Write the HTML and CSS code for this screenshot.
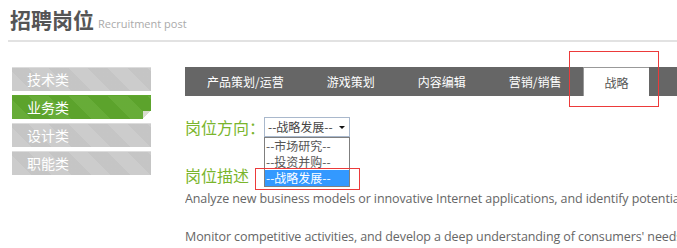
FILE: index.html
```html
<!DOCTYPE html>
<html lang="zh-CN">
<head>
  <meta charset="UTF-8">
  <title>招聘岗位</title>
  <link rel="stylesheet" href="styles.css">
</head>
<body>

  <div class="header">
    <h1>招聘岗位</h1>
    <span class="sub">Recruitment post</span>
  </div>

  <div class="wrap">
    <ul class="side">
      <li>技术类</li>
      <li class="on">业务类</li>
      <li>设计类</li>
      <li>职能类</li>
    </ul>

    <div class="main">
      <div class="tabs">
        <span class="tab">产品策划/运营</span>
        <span class="tab">游戏策划</span>
        <span class="tab">内容编辑</span>
        <span class="tab">营销/销售</span>
        <span class="tab active">战略<i class="mark mark-tab"></i></span>
      </div>

      <div class="row">
        <span class="label">岗位方向：</span>
        <div class="select">
          <span>--战略发展--</span>
          <b class="arrow"></b>
          <ul class="options">
            <li>--市场研究--</li>
            <li>--投资并购--</li>
            <li class="sel">--战略发展--<i class="mark mark-opt"></i></li>
          </ul>
        </div>
      </div>

      <h2 class="label desc-title">岗位描述</h2>
      <p>Analyze new business models or innovative Internet applications, and identify potential opportunities.</p>
      <p>Monitor competitive activities, and develop a deep understanding of consumers' needs.</p>
    </div>
  </div>

</body>
</html>
```

FILE: styles.css
```css
body {
  margin: 0;
  font-family: "Noto Sans CJK SC", sans-serif;
  background: #fff;
  overflow: hidden;
}
.header {
  display: flex;
  align-items: baseline;
  margin-left: 8px;
  height: 40px;
  border-bottom: 2px solid #e2e2e2;
}
.header h1 {
  margin: 0 0 0 2px;
  font-size: 21px;
  font-weight: bold;
  color: #555;
  line-height: 38px;
}
.header .sub {
  margin-left: 4px;
  font-family: "Open Sans", sans-serif;
  font-size: 11px;
  color: #aaa;
}
.wrap {
  display: flex;
  padding-top: 25px;
}
.side {
  list-style: none;
  margin: 0 0 0 12px;
  padding: 0;
  width: 139px;
}
.side li {
  position: relative;
  height: 24px;
  line-height: 23px;
  margin-bottom: 4px;
  padding-left: 15px;
  font-size: 14px;
  color: #fff;
  background: #c9c9c9 repeating-linear-gradient(45deg, rgba(255,255,255,0.06) 0 14px, rgba(0,0,0,0.02) 14px 28px);
  border-top: 1px solid #dcdcdc;
  box-sizing: border-box;
}
.side li.on {
  background: #5fa82d repeating-linear-gradient(45deg, rgba(255,255,255,0.05) 0 14px, rgba(0,0,0,0.03) 14px 28px);
  border-top-color: #5fa82d;
}
.side li.on::after {
  content: "";
  position: absolute;
  right: 0;
  bottom: 0;
  width: 8px;
  height: 8px;
  background: linear-gradient(to bottom right, #d9dccf 50%, #fff 50%);
}
.main {
  flex: 1;
  margin-left: 34px;
  min-width: 0;
}
.tabs {
  display: flex;
  height: 29px;
  background: #666;
}
.tab {
  position: relative;
  padding: 0 21.5px;
  line-height: 29px;
  font-size: 12px;
  color: #fff;
}
.tab:first-child {
  padding-left: 22px;
}
.tab.active {
  padding: 0 20.5px;
  background: #fff;
  color: #555;
  border-left: 1px solid #999;
  border-top: 1px solid #999;
  box-sizing: border-box;
}
.mark {
  position: absolute;
  border: 1.5px solid #ec3a3a;
  pointer-events: none;
}
.mark-tab {
  left: -15px;
  top: -17px;
  width: 88px;
  height: 54px;
}
.row {
  display: flex;
  align-items: center;
  margin-top: 21px;
  height: 20px;
}
.label {
  font-size: 16px;
  font-weight: normal;
  color: #7ab52c;
  line-height: 20px;
}
.select {
  position: relative;
  margin-left: -1px;
  width: 86px;
  height: 20px;
  border: 1px solid #a9b8cc;
  box-sizing: border-box;
  font-size: 12px;
  line-height: 18px;
  color: #444;
  padding-left: 3px;
}
.arrow {
  position: absolute;
  right: 4px;
  top: 8px;
  border-left: 3px solid transparent;
  border-right: 3px solid transparent;
  border-top: 3px solid #111;
}
.options {
  position: absolute;
  left: -1px;
  top: 19px;
  width: 86px;
  margin: 0;
  padding: 0;
  list-style: none;
  background: #fff;
  border: 1px solid #7f7f7f;
  box-sizing: border-box;
}
.options li {
  position: relative;
  height: 16px;
  line-height: 16px;
  padding-left: 1px;
  color: #555;
}
.options li.sel {
  background: #3399ff;
  color: #fff;
}
.mark-opt {
  left: -10px;
  top: -2px;
  width: 103px;
  height: 20px;
}
.desc-title {
  margin: 28px 0 0;
  line-height: 20px;
}
.main p {
  margin: 5px 0 0;
  font-family: "Open Sans", sans-serif;
  font-size: 12.5px;
  letter-spacing: -0.1px;
  color: #666;
  white-space: nowrap;
  overflow: hidden;
  line-height: 18px;
}
.main p + p {
  margin-top: 20px;
}
```
